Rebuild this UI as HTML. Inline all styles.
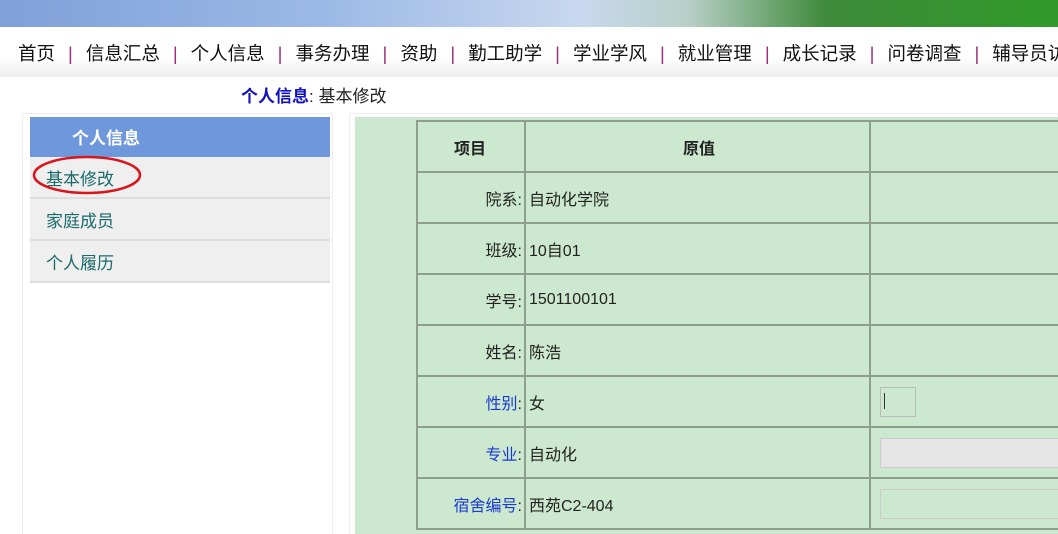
<!DOCTYPE html>
<html><head><meta charset="utf-8"><style>
html,body{margin:0;width:1058px;height:534px;overflow:hidden}
body{background:#fff;font-family:"Liberation Sans","Noto Sans CJK SC",sans-serif;font-size:16px;color:#222;position:relative}
.banner{position:absolute;left:0;top:0;width:1058px;height:27px;background:linear-gradient(90deg,#7fa0d8 0%,#9bb8e6 30%,#c8d8ee 55%,#b8d0c8 65%,#3f8a3a 78%,#2f9a2a 100%)}
.nav{position:absolute;left:0;top:27px;width:1058px;height:50px;background:linear-gradient(#fff 0%,#fff 60%,#eee 100%);white-space:nowrap;overflow:hidden}
.nav span{position:absolute;top:13px;font-size:18.5px;color:#111}
.nav i{color:#a0307a;font-style:normal;margin:0 13px}
.bc{position:absolute;left:241px;top:82px;font-size:17px}
.bc b{color:#1010c0}
.lp{position:absolute;left:22px;top:113px;width:311px;height:421px;border:1px solid #eee;border-bottom:none;box-sizing:border-box}
.lh{position:absolute;left:30px;top:117px;width:300px;height:40px;background:#6f98dc;color:#fff;font-weight:bold;font-size:17px}
.lh span{position:absolute;left:42px;top:7px}
.li{position:absolute;left:30px;width:300px;height:40px;background:#efefef;border-bottom:2px solid #ddd;color:#1a6a6a;font-size:17px}
.li span{position:absolute;left:16px;top:8px}
.gp{position:absolute;left:349px;top:113px;width:709px;height:421px;border:1px solid #eee;border-bottom:none;box-sizing:border-box}
.gi{position:absolute;left:355px;top:117px;width:703px;height:417px;background:#cce8cf;overflow:hidden}
table{position:absolute;left:61px;top:3px;border-collapse:collapse;width:660px}
tr{height:51px}
td{border:2px solid #8f9f8f;font-size:16px;padding:0}
td.k{width:104px;text-align:right;padding-right:2px}
td.v{width:340px;padding-left:3px}
.bl{color:#1a3ad0}
</style></head><body>
<div class="banner"></div>
<div class="nav"><span style="left:18px">首页<i>|</i>信息汇总<i>|</i>个人信息<i>|</i>事务办理<i>|</i>资助<i>|</i>勤工助学<i>|</i>学业学风<i>|</i>就业管理<i>|</i>成长记录<i>|</i>问卷调查<i>|</i>辅导员访</span></div>
<div class="bc"><b>个人信息</b>: 基本修改</div>
<div class="lp"></div>
<div class="lh"><span>个人信息</span></div>
<div class="li" style="top:157px"><span>基本修改</span></div>
<div class="li" style="top:199px"><span>家庭成员</span></div>
<div class="li" style="top:241px"><span>个人履历</span></div>
<svg style="position:absolute;left:30px;top:154px" width="116" height="44"><ellipse cx="57" cy="21" rx="53" ry="18" fill="none" stroke="#d8141c" stroke-width="2.5"/></svg>
<div class="gp"></div><div class="gi">
<table>
<tr><td class="k" style="text-align:center;font-weight:bold">项目</td><td class="v" style="text-align:center;font-weight:bold">原值</td><td></td></tr>
<tr><td class="k">院系:</td><td class="v">自动化学院</td><td></td></tr>
<tr><td class="k">班级:</td><td class="v">10自01</td><td></td></tr>
<tr><td class="k">学号:</td><td class="v">1501100101</td><td></td></tr>
<tr><td class="k">姓名:</td><td class="v">陈浩</td><td></td></tr>
<tr><td class="k bl">性别<span style="color:#222">:</span></td><td class="v">女</td><td><div style="margin-left:9px;width:34px;height:28px;border:1px solid #bbb;position:relative"><div style="position:absolute;left:3px;top:5px;width:1px;height:16px;background:#333"></div></div></td></tr>
<tr><td class="k bl">专业<span style="color:#222">:</span></td><td class="v">自动化</td><td><div style="margin-left:9px;height:28px;background:#e6e6e6;border:1px solid #ccc"></div></td></tr>
<tr><td class="k bl">宿舍编号<span style="color:#222">:</span></td><td class="v">西苑C2-404</td><td><div style="margin-left:9px;height:28px;border:1px solid #ccc"></div></td></tr>
</table></div>
</body></html>
